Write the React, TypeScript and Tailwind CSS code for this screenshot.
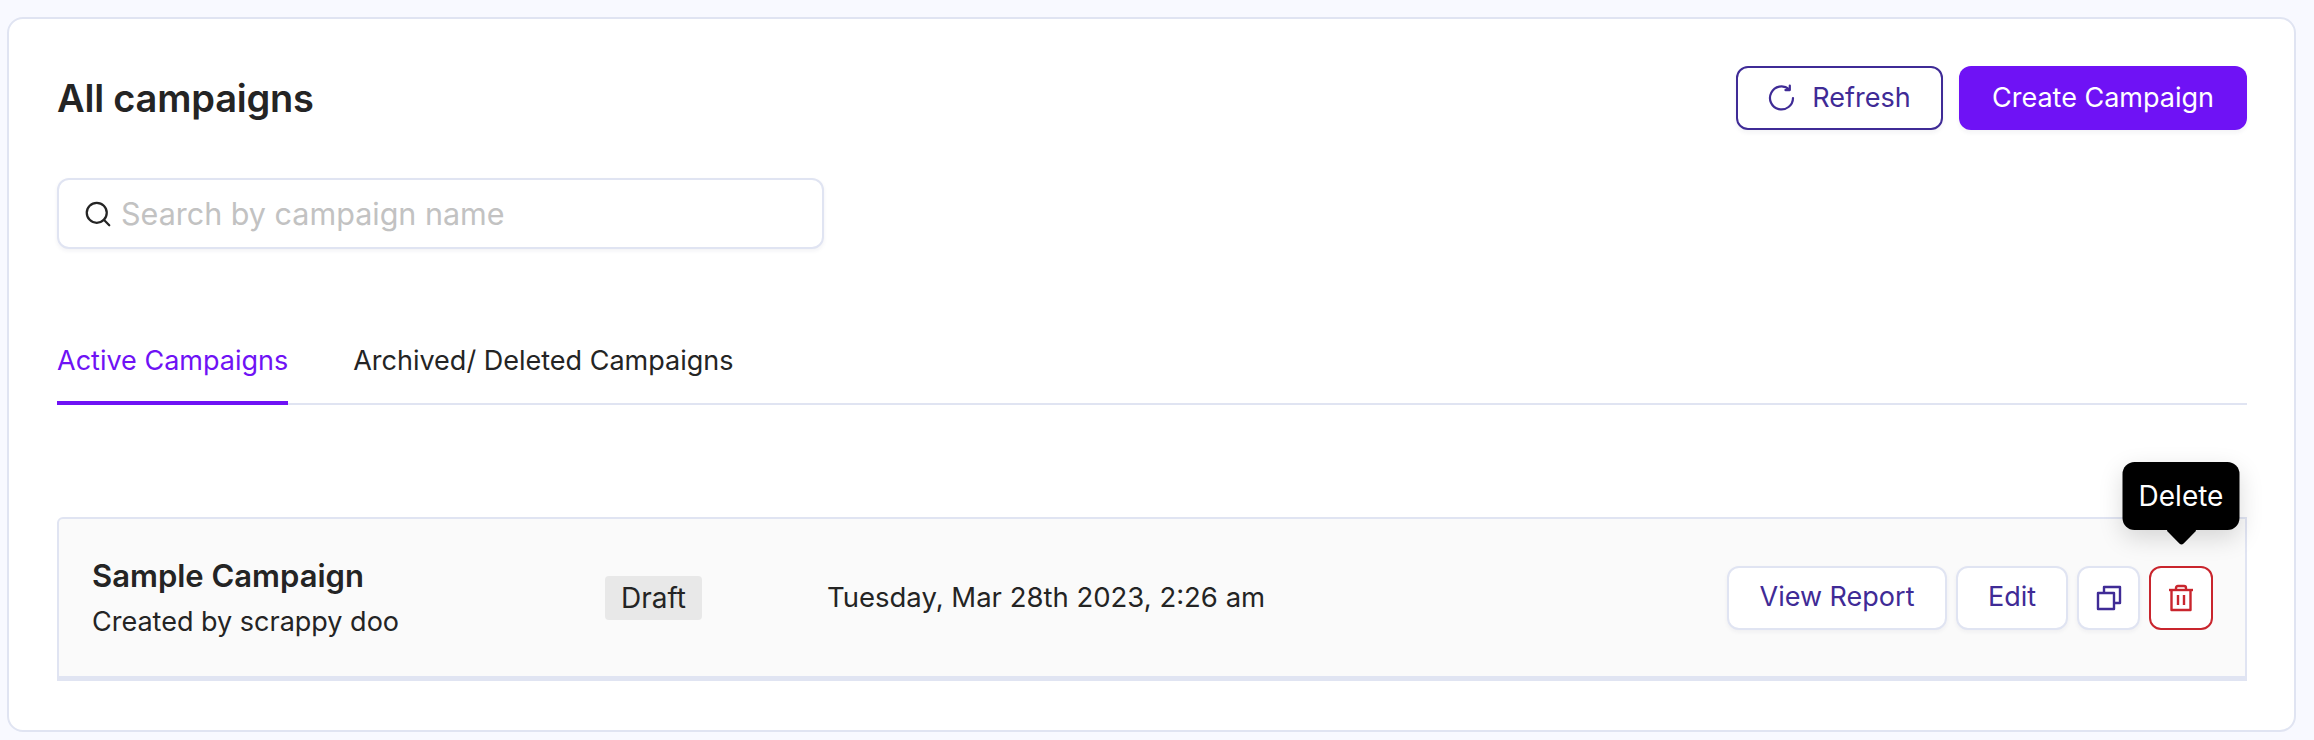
import { Search } from "lucide-react";

function RefreshIcon() {
  return (
    <svg width="28" height="28" viewBox="0 0 28 28" fill="none" stroke="currentColor" strokeWidth="2.2" strokeLinecap="round" strokeLinejoin="round">
      <path d="M25 14a11.5 11.5 0 1 1-4-8.8" />
      <path d="M21.8 1.5v4.6h-4.4" />
    </svg>
  );
}

function CopyIcon() {
  return (
    <svg width="26" height="26" viewBox="0 0 26 26" fill="none" stroke="currentColor" strokeWidth="2.4" strokeLinejoin="round">
      <rect x="2" y="8" width="16" height="16" />
      <path d="M8 8V2h16v16h-6" />
    </svg>
  );
}

function TrashIcon() {
  return (
    <svg width="26" height="28" viewBox="0 0 26 28" fill="none" stroke="currentColor" strokeWidth="2.4" strokeLinejoin="round">
      <path d="M1 6h24" />
      <path d="M8 6V4q0-2 2-2h6q2 0 2 2v2" />
      <path d="M3.5 6v20h19V6" />
      <path d="M10 11v10M16 11v10" />
    </svg>
  );
}

export default function App() {
  return (
    <div className="h-[740px] bg-[#f8f9ff] pt-[17px] pl-[7px] pr-[18px] font-['Inter',sans-serif] text-[#242424]">
      <div className="h-[715px] rounded-[16px] border-2 border-[#e0e4f2] bg-white pl-[48px] pr-[47px] pt-[47px]">
        <div className="flex items-center justify-between">
          <h1 className="text-[38px] font-semibold tracking-[-0.2px]">All campaigns</h1>
          <div className="flex gap-[16px]">
            <button className="flex h-[64px] w-[207px] items-center justify-center gap-[16px] rounded-[12px] border-2 border-[#3f2b96] text-[27px] text-[#3f2b96] shadow-[0_3px_4px_rgba(30,30,80,0.05)]">
              <RefreshIcon />
              Refresh
            </button>
            <button className="h-[64px] w-[288px] rounded-[12px] bg-[#6f12f5] text-[27px] text-white shadow-[0_3px_4px_rgba(30,30,80,0.05)]">
              Create Campaign
            </button>
          </div>
        </div>

        <div className="mt-[48px] flex h-[71px] w-[767px] items-center gap-[8px] rounded-[12px] border-2 border-[#e0e4f2] bg-white px-[24px] shadow-[0_2px_4px_rgba(30,30,80,0.06)]">
          <Search size={30} strokeWidth={1.8} className="text-[#242424]" />
          <span className="text-[30.5px] text-[#c2c2c2]">Search by campaign name</span>
        </div>

        <div className="mt-[96px] flex gap-[65px] border-b-2 border-[#e0e4f2]">
          <div className="-mb-[2px] border-b-4 border-[#6f12f5] pb-[24px] text-[27px] leading-[32px] text-[#6f12f5]">Active Campaigns</div>
          <div className="pb-[24px] text-[27px] leading-[32px]">Archived/ Deleted Campaigns</div>
        </div>

        <div className="relative mt-[112px] flex h-[164px] items-center rounded-tl-[6px] border-x-2 border-t-2 border-b-[5px] border-[#e0e4f2] bg-[#fafafa] pl-[33px] pr-[32px]">
          <div className="w-[513px]">
            <div className="text-[31px] font-semibold leading-[40px]">Sample Campaign</div>
            <div className="mt-[8px] text-[27px] leading-[36px]">Created by scrappy doo</div>
          </div>
          <div className="w-[222px]">
            <span className="inline-flex h-[44px] w-[97px] items-center justify-center rounded-[4px] bg-[#e8e8e8] text-[28px]">Draft</span>
          </div>
          <div className="text-[27.5px]">Tuesday, Mar 28th 2023, 2:26 am</div>
          <div className="ml-auto flex gap-[9px] text-[#3f2b96]">
            <button className="h-[64px] w-[220px] rounded-[12px] border-2 border-[#e0e4f2] bg-white text-[27px] shadow-[0_2px_4px_rgba(30,30,80,0.05)]">View Report</button>
            <button className="h-[64px] w-[112px] rounded-[12px] border-2 border-[#e0e4f2] bg-white text-[27px] shadow-[0_2px_4px_rgba(30,30,80,0.05)]">Edit</button>
            <button className="flex h-[64px] w-[63px] items-center justify-center rounded-[12px] border-2 border-[#e0e4f2] bg-white shadow-[0_2px_4px_rgba(30,30,80,0.05)]">
              <CopyIcon />
            </button>
            <div className="relative">
              <button className="flex h-[64px] w-[64px] items-center justify-center rounded-[12px] border-2 border-[#c9252d] bg-white text-[#c9252d]">
                <TrashIcon />
              </button>
              <div className="absolute bottom-[100px] left-1/2 flex h-[68px] w-[117px] -translate-x-1/2 items-center justify-center rounded-[12px] bg-black text-[28px] text-white shadow-[0_8px_24px_rgba(0,0,0,0.15)]">
                Delete
                <div className="absolute -bottom-[11px] left-1/2 h-[22px] w-[22px] -translate-x-1/2 rotate-45 rounded-[3px] bg-black" />
              </div>
            </div>
          </div>
        </div>
      </div>
    </div>
  );
}
